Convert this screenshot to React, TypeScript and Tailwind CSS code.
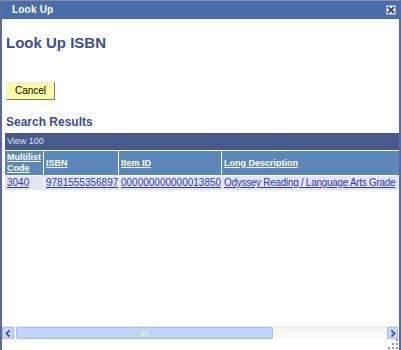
export default function App() {
  return (
    <div className="w-[401px] h-[350px] flex flex-col bg-white border-x-2 border-x-[#5b6a9a] border-t border-t-[#8a8fa6] font-['Liberation_Sans',Arial,sans-serif] overflow-hidden">
      {/* title bar */}
      <div className="h-[18px] shrink-0 bg-[#4a6ea9] flex items-center justify-between pl-[10px] pr-[3px]">
        <span className="text-[10px] font-bold text-white leading-none tracking-[0.2px]">Look Up</span>
        <div className="w-[10px] h-[10px] bg-[#eef1f7] border border-[#9aa6c2] flex items-center justify-center">
          <svg width="8" height="8" viewBox="0 0 8 8">
            <path d="M1 1 L7 7 M7 1 L1 7" stroke="#2f4473" strokeWidth="1.8" />
          </svg>
        </div>
      </div>

      <div className="flex-1 flex flex-col min-h-0">
        <div className="pl-[4px]">
          <h1 className="mt-[15px] text-[15px] leading-[18px] font-bold text-[#3d4e8b]">Look Up ISBN</h1>
          <button className="mt-[30px] w-[49px] h-[18px] bg-[#fdfba6] border border-t-[#eeeeee] border-l-[#eeeeee] border-r-[#7c7c7c] border-b-[#7c7c7c] text-[10px] text-black leading-none">
            Cancel
          </button>
          <h2 className="mt-[14px] text-[12px] leading-[14px] font-bold text-[#3d4e8b]">Search Results</h2>
        </div>

        {/* results grid */}
        <div className="mt-[4px] pl-[3px] overflow-hidden">
          <div className="w-[600px] flex flex-col gap-px">
            <div className="h-[17px] bg-[#485a8c] flex items-center pl-[2px] text-[9px] text-[#dde1ee]">View 100</div>
            <div className="h-[24px] flex gap-px text-[9px] font-bold text-white underline leading-[11px]">
              <div className="w-[38px] bg-[#5b87b9] flex items-center px-[2px]">Multilist Code</div>
              <div className="w-[74px] bg-[#5b87b9] flex items-center px-[2px]">ISBN</div>
              <div className="w-[102px] bg-[#5b87b9] flex items-center px-[2px]">Item ID</div>
              <div className="flex-1 bg-[#5b87b9] flex items-center px-[2px]">Long Description</div>
            </div>
            <div className="h-[14px] flex gap-px text-[10px] text-[#3036c4] underline leading-[14px] whitespace-nowrap">
              <div className="w-[38px] bg-[#e3e6ee] px-[2px]">3040</div>
              <div className="w-[74px] bg-[#e3e6ee] px-[2px]">9781555356897</div>
              <div className="w-[102px] bg-[#e3e6ee] px-[2px]">000000000000013850</div>
              <div className="flex-1 bg-[#e3e6ee] px-[2px] tracking-[-0.3px]">Odyssey Reading / Language Arts Grade</div>
            </div>
          </div>
        </div>

        <div className="flex-1" />

        {/* horizontal scrollbar */}
        <div className="h-[13px] shrink-0 flex items-stretch border-t border-t-[#ecebe6] bg-[#f6f5f1]">
          <div className="w-[12px] bg-[#c5d5fa] border border-[#a9bdea] flex items-center justify-center">
            <svg width="6" height="7" viewBox="0 0 6 7">
              <path d="M4.5 0.5 L1.5 3.5 L4.5 6.5" fill="none" stroke="#3b4a6e" strokeWidth="1.6" />
            </svg>
          </div>
          <div className="w-[2px]" />
          <div className="w-[257px] bg-[#c2d4fb] border border-[#a6bcee] rounded-[2px] flex items-center justify-center">
            <div className="flex gap-px">
              <div className="w-px h-[5px] bg-[#eef3ff]" />
              <div className="w-px h-[5px] bg-[#eef3ff]" />
              <div className="w-px h-[5px] bg-[#eef3ff]" />
              <div className="w-px h-[5px] bg-[#eef3ff]" />
            </div>
          </div>
          <div className="flex-1 bg-gradient-to-b from-[#f2f1ec] to-[#fdfdfb]" />
          <div className="w-[11px] bg-[#c5d5fa] border border-[#a9bdea] flex items-center justify-center">
            <svg width="6" height="7" viewBox="0 0 6 7">
              <path d="M1.5 0.5 L4.5 3.5 L1.5 6.5" fill="none" stroke="#3b4a6e" strokeWidth="1.6" />
            </svg>
          </div>
          <div className="w-px" />
        </div>

        {/* resize grip */}
        <div className="h-[11px] shrink-0 flex justify-end items-end pr-[1px] pb-[1px]">
          <svg width="10" height="10" viewBox="0 0 10 10">
            <rect x="8" y="0" width="2" height="2" fill="#9a9a9a" />
            <rect x="8" y="4" width="2" height="2" fill="#9a9a9a" />
            <rect x="4" y="4" width="2" height="2" fill="#9a9a9a" />
            <rect x="8" y="8" width="2" height="2" fill="#9a9a9a" />
            <rect x="4" y="8" width="2" height="2" fill="#9a9a9a" />
            <rect x="0" y="8" width="2" height="2" fill="#9a9a9a" />
          </svg>
        </div>
      </div>
    </div>
  );
}
